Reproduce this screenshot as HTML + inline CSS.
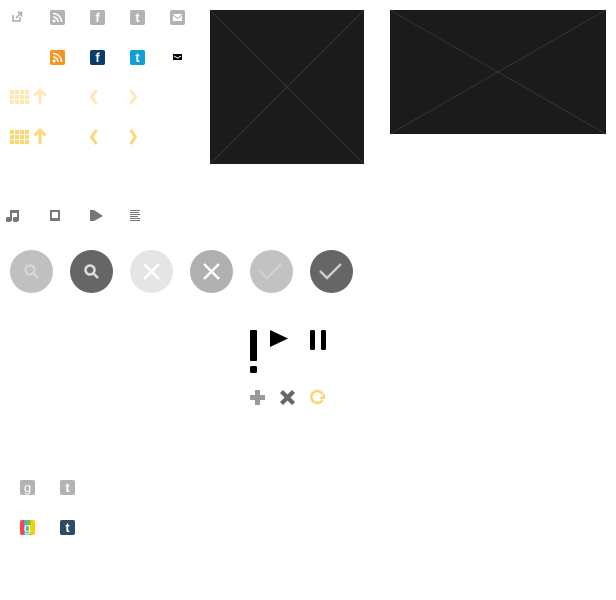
<!DOCTYPE html>
<html><head><style>
body{margin:0;width:616px;height:600px;background:#fff;position:relative;overflow:hidden;font-family:"Liberation Sans",sans-serif}
.a{position:absolute}
.sq{position:absolute;width:15px;height:15px;border-radius:2px;color:#fff;font-weight:bold;text-align:center;font-size:13px;line-height:16px}
</style></head><body>
<svg class="a" style="left:0;top:0" width="616" height="600">
<g stroke="#aaa" stroke-width="1.5" fill="none"><path d="M13 15v6h7v-4"/><path d="M16 18l5-5M17.5 12.5h4v4"/></g>
<rect x="210" y="10" width="154" height="154" fill="#1b1b1b"/>
<path d="M210 10L364 164M364 10L210 164" stroke="#333" stroke-width="1"/>
<rect x="390" y="10" width="216" height="124" fill="#1b1b1b"/>
<path d="M390 10L606 134M606 10L390 134" stroke="#333" stroke-width="1"/>
<g fill="#fde9b0"><rect x="10" y="90" width="4" height="4"/><rect x="15" y="90" width="4" height="4"/><rect x="20" y="90" width="4" height="4"/><rect x="25" y="90" width="4" height="4"/>
<rect x="10" y="95" width="4" height="4"/><rect x="15" y="95" width="4" height="4"/><rect x="20" y="95" width="4" height="4"/><rect x="25" y="95" width="4" height="4"/>
<rect x="10" y="100" width="4" height="4"/><rect x="15" y="100" width="4" height="4"/><rect x="20" y="100" width="4" height="4"/><rect x="25" y="100" width="4" height="4"/></g>
<g fill="#fdd672"><rect x="10" y="130" width="4" height="4"/><rect x="15" y="130" width="4" height="4"/><rect x="20" y="130" width="4" height="4"/><rect x="25" y="130" width="4" height="4"/>
<rect x="10" y="135" width="4" height="4"/><rect x="15" y="135" width="4" height="4"/><rect x="20" y="135" width="4" height="4"/><rect x="25" y="135" width="4" height="4"/>
<rect x="10" y="140" width="4" height="4"/><rect x="15" y="140" width="4" height="4"/><rect x="20" y="140" width="4" height="4"/><rect x="25" y="140" width="4" height="4"/></g>
<g fill="none" stroke-width="2.8"><path d="M40 104V90M34.5 95.5l5.5-5.5 5.5 5.5M96.5 90l-5 7 5 7M130.5 90l5 7-5 7" stroke="#fde9b0"/>
<path d="M40 144V130M34.5 135.5l5.5-5.5 5.5 5.5M96.5 130l-5 7 5 7M130.5 130l5 7-5 7" stroke="#fdd672"/></g>
<g fill="#777"><path d="M10 210h9v11h-2v-8h-5v8h-2z"/><rect x="6" y="217" width="5" height="5" rx="1.5"/><rect x="13" y="217" width="5" height="5" rx="1.5"/>
<path d="M50 210h10v11h-10zM52 212v6h6v-6z" fill-rule="evenodd"/>
<path d="M90 210h4l9 6-9 5h-4z"/>
<rect x="130" y="210" width="10" height="1"/><rect x="130" y="212" width="9" height="1"/><rect x="130" y="214" width="10" height="1"/><rect x="130" y="216" width="8" height="1"/><rect x="130" y="218" width="10" height="1"/><rect x="130" y="220" width="10" height="1"/></g>
<circle cx="31.5" cy="271.5" r="21.5" fill="#c0c0c0"/><circle cx="91.5" cy="271.5" r="21.5" fill="#666"/>
<circle cx="151.5" cy="271.5" r="21.5" fill="#e5e5e5"/><circle cx="211.5" cy="271.5" r="21.5" fill="#b0b0b0"/>
<circle cx="271.5" cy="271.5" r="21.5" fill="#c2c2c2"/><circle cx="331.5" cy="271.5" r="21.5" fill="#666"/>
<g fill="none" stroke-width="2.5"><circle cx="30" cy="270" r="4.5" stroke="#d5d5d5"/><path d="M33 273l5 5" stroke="#d5d5d5"/>
<circle cx="90" cy="270" r="4.5" stroke="#ddd"/><path d="M93 273l5 5" stroke="#ddd"/>
<path d="M144 264l15 15M159 264l-15 15" stroke="#fff"/><path d="M204 264l15 15M219 264l-15 15" stroke="#fff"/>
<path d="M260 271l7 7 14-14" stroke="#d0d0d0"/><path d="M320 271l7 7 14-14" stroke="#ccc"/></g>
<rect x="250" y="330" width="7" height="31" rx="1" fill="#000"/><rect x="250" y="366" width="7" height="7" rx="1.5" fill="#000"/>
<path d="M270 330l18 8.5-18 8.5z" fill="#000"/>
<rect x="310" y="330" width="5" height="20" rx="1.5" fill="#000"/><rect x="321" y="330" width="5" height="20" rx="1.5" fill="#000"/>
<path d="M255 390h5v5h5v5h-5v5h-5v-5h-5v-5h5z" fill="#999"/>
<path d="M283 390l4.5 4.5L292 390l3 3-4.5 4.5L295 402l-3 3-4.5-4.5L283 405l-3-3 4.5-4.5L280 393z" fill="#666"/>
<path d="M322.5 394a6 6 0 1 0 0 6" fill="none" stroke="#fdd672" stroke-width="2.5"/><path d="M319 399h6v-6z" fill="#fdd672"/>
</svg>
<div class="sq" style="left:50px;top:10px;background:#b3b3b3"></div>
<svg class="a" style="left:50px;top:10px" width="15" height="15"><circle cx="4" cy="11" r="1.5" fill="#fff"/><g fill="none" stroke="#fff" stroke-width="1.5"><path d="M3 7a5 5 0 0 1 5 5M3 3.5a8.5 8.5 0 0 1 8.5 8.5"/></g></svg>
<div class="sq" style="left:90px;top:10px;background:#b3b3b3">f</div>
<div class="sq" style="left:130px;top:10px;background:#b3b3b3">t</div>
<div class="sq" style="left:170px;top:10px;background:#b3b3b3"></div>
<svg class="a" style="left:170px;top:10px" width="15" height="15"><rect x="3" y="4" width="9" height="7" fill="#fff"/><path d="M3 5l4.5 3.5L12 5" fill="none" stroke="#b3b3b3"/></svg>
<div class="sq" style="left:50px;top:50px;background:#f7931e"></div>
<svg class="a" style="left:50px;top:50px" width="15" height="15"><circle cx="4" cy="11" r="1.5" fill="#fff"/><g fill="none" stroke="#fff" stroke-width="1.5"><path d="M3 7a5 5 0 0 1 5 5M3 3.5a8.5 8.5 0 0 1 8.5 8.5"/></g></svg>
<div class="sq" style="left:90px;top:50px;background:#0a3d6b">f</div>
<div class="sq" style="left:130px;top:50px;background:#11a0d6">t</div>
<svg class="a" style="left:173px;top:54px" width="9" height="6"><rect width="9" height="6" fill="#000"/><path d="M1 2l3.5 2L8 2" stroke="#fff" fill="none"/></svg>
<div class="sq" style="left:20px;top:480px;background:#b3b3b3;font-weight:normal">g</div>
<div class="sq" style="left:60px;top:480px;background:#b3b3b3">t</div>
<div class="sq" style="left:20px;top:520px;background:linear-gradient(90deg,#f44 0 27%,#5af 27% 47%,#6c3 47% 70%,#fc0 70%);font-weight:normal">g</div>
<div class="sq" style="left:60px;top:520px;background:#2f4a63">t</div>
</body></html>
